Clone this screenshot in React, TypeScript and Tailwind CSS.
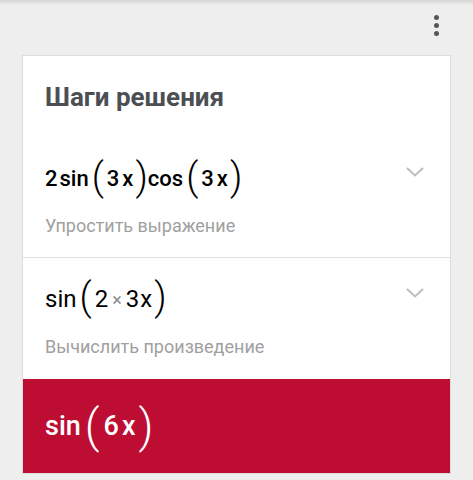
import React from "react";

const Paren = ({ c }: { c: string }) => (
  <span className="text-[38px] font-light leading-none text-black">{c}</span>
);

const Chevron = () => (
  <svg width="18" height="10" viewBox="0 0 18 10" fill="none">
    <polyline points="1,1 9,8.5 17,1" stroke="#bdbdbd" strokeWidth="2" />
  </svg>
);

const StepRow = ({
  expr,
  hint,
  border,
  exprClass,
}: {
  expr: React.ReactNode;
  hint: string;
  border?: boolean;
  exprClass: string;
}) => (
  <div className={`flex h-[121px] justify-between pl-[22px] pr-[26px] ${border ? "border-b border-[#e0e0e0]" : ""}`}>
    <div className="flex flex-col pt-[21px]">
      <div className={`flex h-[40px] items-center text-black ${exprClass}`}>{expr}</div>
      <div className="mt-[16px] h-[24px] text-[18px] leading-[24px] text-[#a0a0a0]">{hint}</div>
    </div>
    <div className="pt-[30px]">
      <Chevron />
    </div>
  </div>
);

const App = () => {
  return (
    <div
      className="relative h-[480px] w-[473px] overflow-hidden bg-[#eeeeee]"
      style={{ fontFamily: "Roboto, 'Noto Sans', sans-serif" }}
    >
      <div className="absolute inset-x-0 top-0 h-[5px] bg-gradient-to-b from-[#d6d6d6] to-[#eeeeee]" />
      <div className="flex h-[55px] justify-end pr-[34px] pt-[15px]">
        <div className="flex flex-col gap-[3px]">
          <span className="h-[5px] w-[5px] rounded-full bg-[#575757]" />
          <span className="h-[5px] w-[5px] rounded-full bg-[#575757]" />
          <span className="h-[5px] w-[5px] rounded-full bg-[#575757]" />
        </div>
      </div>
      <div className="mx-[22px] border border-[#dcdcdc] bg-white">
        <div className="flex h-[81px] items-start pl-[22px] pt-[26px]">
          <h2 className="text-[26px] font-bold leading-[30px] text-[#4b4f54]">Шаги решения</h2>
        </div>
        <StepRow
          border
          exprClass="text-[22px] font-medium"
          hint="Упростить выражение"
          expr={
            <>
              <span>2</span>
              <span className="ml-[2px]">sin</span>
              <span className="ml-[3px]"><Paren c="(" /></span>
              <span className="ml-[3px]">3</span>
              <span className="ml-[3px]">x</span>
              <span className="ml-[2px]"><Paren c=")" /></span>
              <span>cos</span>
              <span className="ml-[3px]"><Paren c="(" /></span>
              <span className="ml-[3px]">3</span>
              <span className="ml-[3px]">x</span>
              <span className="ml-[2px]"><Paren c=")" /></span>
            </>
          }
        />
        <StepRow
          exprClass="text-[24px] font-normal"
          hint="Вычислить произведение"
          expr={
            <>
              <span>sin</span>
              <span className="ml-[3px]"><Paren c="(" /></span>
              <span className="ml-[3px]">2</span>
              <span className="mx-[4px] text-[18px] text-[#8f8f8f]">×</span>
              <span>3</span>
              <span className="ml-[1px]">x</span>
              <span className="ml-[2px]"><Paren c=")" /></span>
            </>
          }
        />
        <div className="flex h-[94px] items-center bg-[#be0d33] pl-[22px] text-[27px] font-medium text-white">
          <span>sin</span>
          <span className="ml-[4px] text-[46px] font-light leading-none">(</span>
          <span className="ml-[4px]">6</span>
          <span className="ml-[3px]">x</span>
          <span className="ml-[3px] text-[46px] font-light leading-none">)</span>
        </div>
      </div>
    </div>
  );
};

export default App;
